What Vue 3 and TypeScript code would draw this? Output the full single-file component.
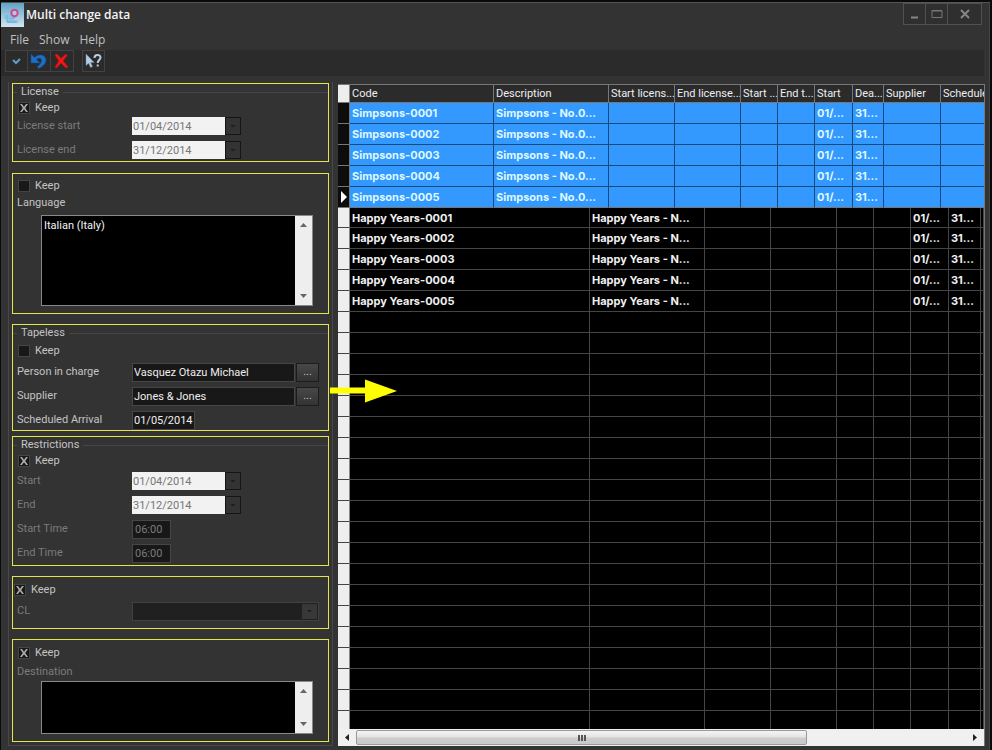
<script setup lang="ts">
import { reactive } from 'vue'

interface Row {
  code: string
  description: string
  start: string
  deadline: string
}

const keep = reactive({
  license: true,
  language: false,
  tapeless: false,
  restrictions: true,
  cl: true,
  destination: true,
})

const form = reactive({
  licenseStart: '01/04/2014',
  licenseEnd: '31/12/2014',
  language: 'Italian (Italy)',
  person: 'Vasquez Otazu Michael',
  supplier: 'Jones & Jones',
  arrival: '01/05/2014',
  start: '01/04/2014',
  end: '31/12/2014',
  startTime: '06:00',
  endTime: '06:00',
  destination: '',
})

const headers: string[] = [
  'Code', 'Description', 'Start licens...', 'End license...', 'Start ...',
  'End t...', 'Start', 'Dea...', 'Supplier', 'Schedule',
]

const makeRows = (name: string, description: string): Row[] =>
  Array.from({ length: 5 }, (_, i) => ({
    code: `${name}-000${i + 1}`,
    description,
    start: '01/...',
    deadline: '31...',
  }))

const selectedRows = makeRows('Simpsons', 'Simpsons - No.0...')
const otherRows = makeRows('Happy Years', 'Happy Years - N...')
const emptyRows = 20
</script>

<template>
  <div class="window">
    <header class="titlebar">
      <svg class="app-icon" viewBox="0 0 23 24" aria-hidden="true">
        <defs>
          <linearGradient id="sky" x1="0" y1="0" x2="0" y2="1">
            <stop offset="0" stop-color="#5fa3c6" />
            <stop offset="1" stop-color="#d3e6f0" />
          </linearGradient>
        </defs>
        <rect width="23" height="24" fill="url(#sky)" />
        <path d="M3 11h5v-2h5v8h4v3H6v-4H3z" fill="#8cc3e4" />
        <path d="M6 12v7h9M9 15h5v-4" fill="none" stroke="#6aaedb" />
        <circle cx="13.500" cy="10" r="3.200" fill="#a8cbe4" stroke="#d0488f" stroke-width="2" />
      </svg>
      <h1>Multi change data</h1>
      <div class="window-buttons">
        <button type="button" aria-label="Minimize">
          <svg viewBox="0 0 14 12"><path d="M3 9.500h7" stroke="#858585" stroke-width="2" /></svg>
        </button>
        <button type="button" aria-label="Maximize">
          <svg viewBox="0 0 14 12"><path d="M2 2.500h10v7H2zM2 3h10" fill="none" stroke="#777" /></svg>
        </button>
        <button type="button" class="close" aria-label="Close">
          <svg viewBox="0 0 14 12"><path d="M3 2l8 8M11 2l-8 8" stroke="#858585" stroke-width="2" /></svg>
        </button>
      </div>
    </header>

    <nav class="menu">
      <a href="#file">File</a>
      <a href="#show">Show</a>
      <a href="#help">Help</a>
    </nav>

    <div class="toolbar">
      <button type="button" aria-label="Apply">
        <svg viewBox="0 0 20 18"><path d="M7 8l3 3 4-4" fill="none" stroke="#5f9fc8" stroke-width="2" /></svg>
      </button>
      <button type="button" aria-label="Undo">
        <svg viewBox="0 0 20 18">
          <path d="M3 2v9h9l-3.500-3.500c2-2 5-1.500 5 1 0 2-1.500 4-4.500 6.500l2 1.500c4-2 7-5 7-8.500 0-5-7-7-11.500-2.500z" fill="#1e6fc4" stroke="#0f4a92" stroke-width=".6" />
        </svg>
      </button>
      <button type="button" aria-label="Cancel">
        <svg viewBox="0 0 20 18"><path d="M4 3l2-1 4 4.500L15 2l1 1.500L12 9l5 6-2 1-5-5-4.500 5L4 15l4-6z" fill="#f01818" stroke="#c01010" /></svg>
      </button>
      <button type="button" class="apart" aria-label="Context help">
        <svg viewBox="0 0 20 18">
          <path d="M3 2v11.500l2.600-2.300 2 4.300 2-1-2-4h3.600z" fill="#b5cde0" stroke="#6f8ba4" stroke-width=".5" />
          <path d="M11.500 6c0-4 6-4 6-.5 0 2.500-2.800 2.500-2.800 5.500M14.700 12.500v2" fill="none" stroke="#b5cde0" stroke-width="2" />
        </svg>
      </button>
    </div>

    <main class="content">
      <form class="panel" @submit.prevent>
        <section class="group license">
          <h2><span>License</span></h2>
          <label class="keep"><input v-model="keep.license" type="checkbox" />Keep</label>
          <div class="field off">
            <label for="license-start">License start</label>
            <div class="date">
              <input id="license-start" v-model="form.licenseStart" type="text" disabled />
              <button type="button" disabled aria-label="Pick license start"><i class="caret"></i></button>
            </div>
          </div>
          <div class="field off">
            <label for="license-end">License end</label>
            <div class="date">
              <input id="license-end" v-model="form.licenseEnd" type="text" disabled />
              <button type="button" disabled aria-label="Pick license end"><i class="caret"></i></button>
            </div>
          </div>
        </section>

        <section class="group language">
          <label class="keep"><input v-model="keep.language" type="checkbox" />Keep</label>
          <label class="caption" for="language">Language</label>
          <div class="list tall">
            <textarea id="language" v-model="form.language"></textarea>
            <div class="vbar"><i class="up"></i><i class="down"></i></div>
          </div>
        </section>

        <section class="group tapeless">
          <h2><span>Tapeless</span></h2>
          <label class="keep"><input v-model="keep.tapeless" type="checkbox" />Keep</label>
          <div class="field">
            <label for="person">Person in charge</label>
            <div class="lookup">
              <input id="person" v-model="form.person" type="text" />
              <button type="button" aria-label="Choose person">...</button>
            </div>
          </div>
          <div class="field">
            <label for="supplier">Supplier</label>
            <div class="lookup">
              <input id="supplier" v-model="form.supplier" type="text" />
              <button type="button" aria-label="Choose supplier">...</button>
            </div>
          </div>
          <div class="field">
            <label for="arrival">Scheduled Arrival</label>
            <input id="arrival" v-model="form.arrival" class="short" type="text" />
          </div>
          <svg class="arrow" viewBox="0 0 68 24" aria-hidden="true">
            <path d="M0 8.500h35V0.500L67 12 35 23.500V14.500H0z" fill="#ff0" />
          </svg>
        </section>

        <section class="group restrictions">
          <h2><span>Restrictions</span></h2>
          <label class="keep"><input v-model="keep.restrictions" type="checkbox" />Keep</label>
          <div class="field off">
            <label for="start">Start</label>
            <div class="date">
              <input id="start" v-model="form.start" type="text" disabled />
              <button type="button" disabled aria-label="Pick start"><i class="caret"></i></button>
            </div>
          </div>
          <div class="field off">
            <label for="end">End</label>
            <div class="date">
              <input id="end" v-model="form.end" type="text" disabled />
              <button type="button" disabled aria-label="Pick end"><i class="caret"></i></button>
            </div>
          </div>
          <div class="field off">
            <label for="start-time">Start Time</label>
            <input id="start-time" v-model="form.startTime" class="time" type="text" disabled />
          </div>
          <div class="field off">
            <label for="end-time">End Time</label>
            <input id="end-time" v-model="form.endTime" class="time" type="text" disabled />
          </div>
        </section>

        <section class="group cl">
          <label class="keep"><input v-model="keep.cl" type="checkbox" />Keep</label>
          <div class="field off">
            <label for="cl">CL</label>
            <div class="combo">
              <select id="cl" disabled></select>
              <span class="drop"><i class="caret"></i></span>
            </div>
          </div>
        </section>

        <section class="group destination">
          <label class="keep"><input v-model="keep.destination" type="checkbox" />Keep</label>
          <label class="caption off" for="destination">Destination</label>
          <div class="list">
            <textarea id="destination" v-model="form.destination"></textarea>
            <div class="vbar"><i class="up"></i><i class="down"></i></div>
          </div>
        </section>
      </form>

      <div class="grid">
        <table class="selected">
          <colgroup>
            <col class="w-mark" /><col class="w-code" /><col class="w-text" /><col class="w-date" /><col class="w-date" />
            <col class="w-time" /><col class="w-time" /><col class="w-start" /><col class="w-dead" /><col class="w-supplier" /><col />
          </colgroup>
          <thead>
            <tr>
              <td class="mark"></td>
              <th v-for="(header, i) in headers" :key="i" scope="col">{{ header }}</th>
            </tr>
          </thead>
          <tbody>
            <tr v-for="(row, i) in selectedRows" :key="row.code">
              <td class="mark"><i v-if="i === selectedRows.length - 1" class="current"></i></td>
              <td>{{ row.code }}</td>
              <td>{{ row.description }}</td>
              <td></td><td></td><td></td><td></td>
              <td>{{ row.start }}</td>
              <td>{{ row.deadline }}</td>
              <td></td><td></td>
            </tr>
          </tbody>
        </table>
        <table class="rest">
          <colgroup>
            <col class="w-mark" /><col class="w-wide" /><col class="w-text" /><col class="w-date" /><col class="w-date" />
            <col class="w-time" /><col class="w-time" /><col class="w-start" /><col class="w-end" /><col />
          </colgroup>
          <tbody>
            <tr v-for="row in otherRows" :key="row.code">
              <td class="mark"></td>
              <td>{{ row.code }}</td>
              <td>{{ row.description }}</td>
              <td></td><td></td><td></td><td></td>
              <td>{{ row.start }}</td>
              <td>{{ row.deadline }}</td>
              <td></td>
            </tr>
            <tr v-for="n in emptyRows" :key="n">
              <td class="mark"></td>
              <td v-for="c in 9" :key="c"></td>
            </tr>
          </tbody>
        </table>
        <div class="hbar">
          <button type="button" class="left" aria-label="Scroll left"><i></i></button>
          <div class="track"><div class="thumb"><i></i><i></i><i></i></div></div>
          <button type="button" class="right" aria-label="Scroll right"><i></i></button>
        </div>
      </div>
    </main>
  </div>
</template>

<style>
body {
  margin: 0;
  background: #333;
}
</style>

<style scoped>
* {
  box-sizing: border-box;
}

.window {
  min-height: 100vh;
  border: solid #0a0a0a;
  border-width: 2px 2px 0 1px;
  background: #333;
  box-shadow: inset 0 1px #555, inset -1px 0 #444;
  color: #c4c4c4;
  font: 11px/16px Roboto, "Liberation Sans", sans-serif;
}

button,
input,
select,
textarea {
  margin: 0;
  padding: 0;
  border: 0;
  border-radius: 0;
  outline: 0;
  appearance: none;
  font: inherit;
  color: inherit;
}

svg {
  display: block;
}

/* Title, menu and toolbar */
.titlebar {
  display: flex;
  align-items: flex-start;
  height: 28px;
}

.app-icon {
  width: 23px;
  height: 24px;
  margin-top: 1px;
}

h1 {
  flex: 1;
  margin: 0;
  padding: 5px 0 0 2px;
  color: #f4f4f4;
  font: 600 12px/16px "Open Sans", sans-serif;
}

.window-buttons {
  display: flex;
  margin: 1px 8px 0 0;
  border: 1px solid #515151;
}

.window-buttons button {
  display: grid;
  place-items: center;
  width: 22px;
  height: 20px;
  border-right: 1px solid #515151;
  background: #2f2f2f;
}

.window-buttons .close {
  width: 33px;
  border-right: 0;
}

.window-buttons svg {
  width: 14px;
  height: 12px;
}

.menu {
  display: flex;
  gap: 10px;
  height: 20px;
  padding: 2px 9px 0;
  font: 12px/16px "Open Sans", sans-serif;
}

.menu a {
  color: #c0c0c0;
  text-decoration: none;
}

.toolbar {
  display: flex;
  height: 26px;
  margin-right: 6px;
  padding: 0 0 0 4px;
  background: #2b2b2b;
}

.toolbar button {
  width: 23px;
  height: 22px;
  border: 1px solid #424242;
  background: #2b2b2b;
}

.toolbar button + button {
  border-left-width: 0;
}

.toolbar .apart {
  margin-left: 8px;
  border-left-width: 1px;
}

.toolbar svg {
  width: 20px;
  height: 18px;
}

/* Form */
.content {
  display: grid;
  grid-template-columns: 325px minmax(0, 1fr);
  gap: 5px;
  padding: 6px 5px 4px 7px;
}

.panel {
  display: flex;
  flex-direction: column;
  gap: 10px;
  padding: 1px 3px;
  border: solid #484848;
  border-width: 0 1px 1px;
}

.group {
  position: relative;
  display: flex;
  flex-direction: column;
  align-items: flex-start;
  border: 1px solid #e4e44c;
}

.license {
  margin-bottom: 1px;
  padding-bottom: 1px;
}

.language,
.destination {
  padding: 4px 0 7px;
}

.restrictions {
  margin-top: -5px;
  padding-bottom: 2px;
}

.cl {
  padding: 5px 0 7px;
}

.destination {
  padding-top: 5px;
}

h2 {
  display: flex;
  align-items: center;
  width: 100%;
  margin: 0;
  font: inherit;
}

h2 span {
  padding: 0 4px;
}

h2::before,
h2::after {
  height: 1px;
  background: #464646;
  content: "";
}

h2::before {
  width: 4px;
}

h2::after {
  flex: 1;
}

.keep {
  display: flex;
  align-items: center;
  gap: 5px;
  height: 16px;
  margin-left: 5px;
}

.tapeless .keep {
  margin: 2px 0 3px 5px;
}

.restrictions .keep {
  margin-bottom: 2px;
}

.cl .keep {
  margin: 0 0 3px 1px;
}

.keep input {
  display: grid;
  place-items: center;
  width: 12px;
  height: 12px;
  border: 1px solid #444;
  background: #181818;
}

.keep input:checked::before {
  width: 8px;
  height: 8px;
  background: #aaa;
  clip-path: polygon(0 0, 25% 0, 50% 35%, 75% 0, 100% 0, 65% 50%, 100% 100%, 75% 100%, 50% 65%, 25% 100%, 0 100%, 35% 50%);
  content: "";
}

.caption {
  margin: 1px 0 4px 4px;
}

.destination .caption {
  margin: 3px 0 1px 4px;
}

.field {
  display: grid;
  grid-template-columns: 115px minmax(0, 1fr);
  align-items: center;
  width: 100%;
  height: 20px;
  padding: 0 9px 0 4px;
}

.field + .field {
  margin-top: 4px;
}

.off {
  color: #7b7b7b;
}

.date {
  display: flex;
  align-items: center;
  width: 109px;
}

.date input {
  flex: 1;
  min-width: 0;
  height: 18px;
  padding-left: 1px;
  background: #f2f2f2;
  color: #777;
}

.date button {
  display: grid;
  place-items: center;
  width: 16px;
  height: 18px;
  border: 1px solid #151515;
  background: #333;
}

.caret {
  width: 6px;
  height: 3px;
  background: #1d1d1d;
  clip-path: polygon(0 0, 100% 0, 50% 100%);
}

.lookup {
  display: flex;
  gap: 1px;
}

.lookup input,
.short,
.time {
  min-width: 0;
  height: 19px;
  padding-left: 1px;
  border: 1px solid #464646;
  background: #181818;
}

.lookup input {
  flex: 1;
  color: #eee;
}

.lookup button {
  width: 23px;
  border: 1px solid #1c1c1c;
  background: linear-gradient(#484848, #333);
  line-height: 12px;
}

.short {
  width: 63px;
  color: #eee;
}

.time {
  width: 39px;
  padding-left: 2px;
}

.combo {
  position: relative;
}

.combo select {
  display: block;
  width: 100%;
  height: 19px;
  border: 1px solid #484848;
  background: #181818;
}

.drop {
  position: absolute;
  top: 2px;
  right: 2px;
  display: grid;
  place-items: center;
  width: 15px;
  height: 15px;
  background: #383838;
}

.list {
  display: flex;
  align-self: stretch;
  height: 53px;
  margin: 0 15px 0 28px;
  border: 1px solid #888;
  background: #000;
}

.tall {
  height: 91px;
}

.list textarea {
  flex: 1;
  min-width: 0;
  padding: 2px;
  background: #000;
  color: #f4f4f4;
  resize: none;
}

.vbar {
  display: flex;
  flex-direction: column;
  justify-content: space-between;
  align-items: center;
  width: 17px;
  padding: 7px 0;
  background: #eee;
}

.up,
.down {
  width: 7px;
  height: 4px;
  background: #666;
  clip-path: polygon(50% 0, 100% 100%, 0 100%);
}

.down {
  clip-path: polygon(0 0, 100% 0, 50% 100%);
}

.arrow {
  position: absolute;
  top: 54px;
  left: 317px;
  z-index: 1;
  width: 68px;
  height: 24px;
}

/* Data grid */
.grid {
  margin-top: 2px;
  border: solid #777;
  border-width: 1px 1px 0 0;
  overflow: hidden;
}

table {
  width: 100%;
  border-collapse: separate;
  border-spacing: 0;
  table-layout: fixed;
}

.w-mark { width: 12px; }
.w-code { width: 144px; }
.w-wide { width: 240px; }
.w-text { width: 115px; }
.w-date { width: 66px; }
.w-time { width: 37px; }
.w-start { width: 38px; }
.w-dead { width: 31px; }
.w-end { width: 32px; }
.w-supplier { width: 57px; }

th,
td {
  height: 21px;
  padding: 0 0 0 2px;
  overflow: hidden;
  border: solid #454545;
  border-width: 0 1px 1px 0;
  white-space: nowrap;
}

th,
thead td {
  height: 18px;
  border-color: #777;
  background: #2b2b2b;
  color: #eee;
  font-weight: normal;
  text-align: left;
}

tbody td {
  font: bold 11px/16px Inter, sans-serif;
}

.selected tbody td {
  border-color: #174a7b;
  background: #3399ff;
  color: #dff8ff;
}

.selected tbody tr:last-child td {
  border-bottom-color: #777;
}

.selected th:last-child,
.selected td:last-child {
  border-right: 0;
}

.rest td {
  background: #000;
  color: #f0f0f0;
}

.rest tr:first-child td {
  height: 20px;
}

.rest tr:last-child td {
  height: 18px;
  border-bottom: 0;
}

thead .mark,
.rest td.mark {
  padding: 0;
  border-right-color: #888;
  background: #eee;
}

.selected tbody td.mark {
  padding: 0;
  border-color: #777;
  background: #0c0c0c;
}

.current {
  display: block;
  width: 6px;
  height: 12px;
  margin-left: 3px;
  background: #fff;
  clip-path: polygon(0 0, 100% 50%, 0 100%);
}

.hbar {
  display: flex;
  height: 17px;
  background: #f0f0f0;
}

.hbar button {
  display: grid;
  place-items: center;
  width: 18px;
  background: #f0f0f0;
}

.hbar button i {
  width: 4px;
  height: 7px;
  background: #222;
  clip-path: polygon(100% 0, 100% 100%, 0 50%);
}

.hbar .right i {
  clip-path: polygon(0 0, 100% 50%, 0 100%);
}

.track {
  flex: 1;
  padding: 1px 0;
}

.thumb {
  display: flex;
  justify-content: center;
  align-items: center;
  gap: 1px;
  width: 74%;
  height: 15px;
  border: 1px solid #999;
  border-radius: 2px;
  background: linear-gradient(#f4f4f4, #e3e3e3 48%, #cdcdcd 52%, #c9c9c9);
}

.thumb i {
  width: 2px;
  height: 6px;
  background: #555;
}
</style>
